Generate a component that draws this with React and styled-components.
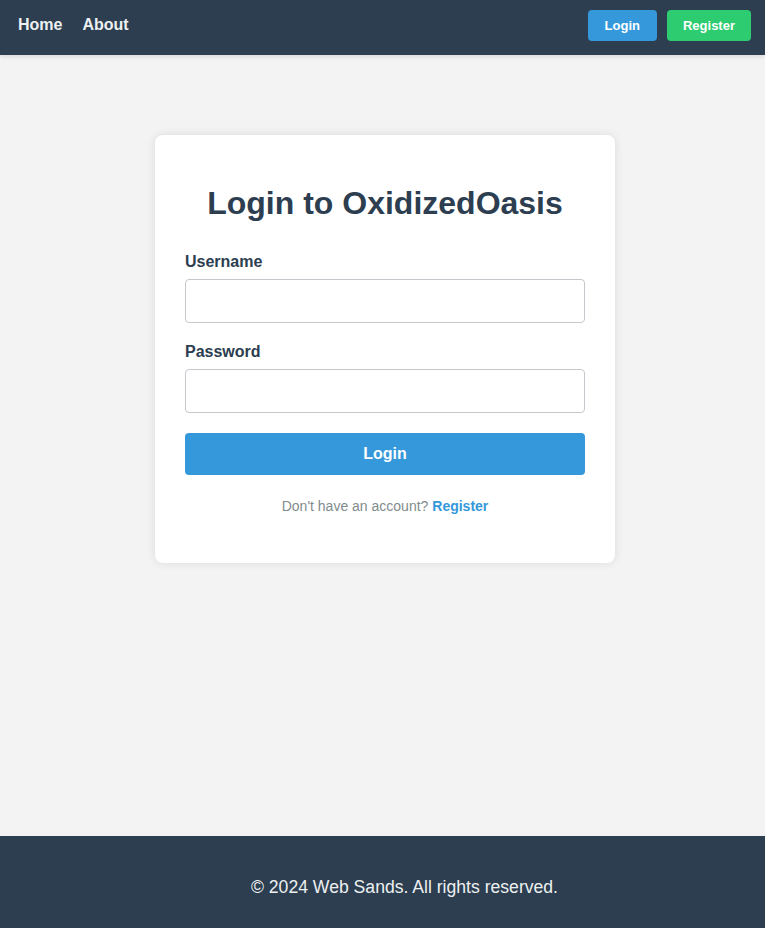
import React from "react";
import styled, { createGlobalStyle } from "styled-components";

const GlobalStyle = createGlobalStyle`
  * {
    box-sizing: border-box;
  }
  body {
    margin: 0;
    font-family: "Liberation Sans", Arial, sans-serif;
    background: #f3f3f3;
    color: #2c3e50;
  }
`;

const Page = styled.div`
  min-height: 100vh;
  display: flex;
  flex-direction: column;
`;

const Header = styled.header`
  height: 55px;
  background: #2c3e50;
  display: flex;
  align-items: center;
  justify-content: space-between;
  padding: 0 14px 0 18px;
  box-shadow: 0 2px 4px rgba(0, 0, 0, 0.1);
`;

const NavLinks = styled.nav`
  display: flex;
  gap: 20px;
  margin-top: -6px;
`;

const NavLink = styled.a`
  color: #ecf0f1;
  font-weight: bold;
  font-size: 16px;
  text-decoration: none;
`;

const NavButtons = styled.div`
  display: flex;
  gap: 10px;
  margin-top: -4px;
`;

const NavButton = styled.a`
  display: block;
  padding: 8px ${(p) => (p.$green ? "16px" : "17px")};
  font-size: 13px;
  line-height: 15px;
  font-weight: bold;
  color: #fff;
  text-decoration: none;
  border-radius: 4px;
  background: ${(p) => (p.$green ? "#2ecc71" : "#3498db")};
`;

const Main = styled.main`
  flex: 1;
  display: flex;
  justify-content: center;
  align-items: flex-start;
  padding: 80px 0 0 5px;
`;

const Card = styled.div`
  width: 460px;
  background: #fff;
  border-radius: 8px;
  padding: 30px;
  box-shadow: 0 0 10px rgba(0, 0, 0, 0.1);
`;

const Title = styled.h2`
  margin: 20px 0 31px;
  text-align: center;
  font-size: 32px;
  line-height: 37px;
  font-weight: bold;
  color: #2c3e50;
`;

const FormGroup = styled.div`
  margin-bottom: 20px;
`;

const Label = styled.label`
  display: block;
  font-weight: bold;
  font-size: 16px;
  line-height: 18px;
  margin-bottom: 8px;
  color: #2c3e50;
`;

const Input = styled.input`
  display: block;
  width: 100%;
  height: 44px;
  padding: 10px;
  font-size: 16px;
  border: 1px solid #c4c8cc;
  border-radius: 4px;
  background: #fff;
  outline: none;
`;

const SubmitButton = styled.button`
  display: block;
  width: 100%;
  height: 42px;
  border: none;
  border-radius: 4px;
  background: #3498db;
  color: #fff;
  font-family: inherit;
  font-size: 16px;
  font-weight: bold;
  cursor: pointer;
`;

const Switch = styled.p`
  margin: 23px 0 19px;
  text-align: center;
  font-size: 14px;
  line-height: 16px;
  color: #7f8c8d;
`;

const SwitchLink = styled.a`
  color: #3498db;
  font-weight: bold;
  text-decoration: none;
`;

const Footer = styled.footer`
  background: #2c3e50;
  color: #ecf0f1;
  text-align: center;
  padding: 41px 0 31px 44px;
  font-size: 17.6px;
  line-height: 20px;
`;

export default function App() {
  return (
    <Page>
      <GlobalStyle />
      <Header>
        <NavLinks>
          <NavLink href="#">Home</NavLink>
          <NavLink href="#">About</NavLink>
        </NavLinks>
        <NavButtons>
          <NavButton href="#">Login</NavButton>
          <NavButton href="#" $green>
            Register
          </NavButton>
        </NavButtons>
      </Header>
      <Main>
        <Card>
          <Title>Login to OxidizedOasis</Title>
          <form onSubmit={(e) => e.preventDefault()}>
            <FormGroup>
              <Label htmlFor="username">Username</Label>
              <Input id="username" type="text" />
            </FormGroup>
            <FormGroup>
              <Label htmlFor="password">Password</Label>
              <Input id="password" type="password" />
            </FormGroup>
            <SubmitButton type="submit">Login</SubmitButton>
          </form>
          <Switch>
            Don't have an account? <SwitchLink href="#">Register</SwitchLink>
          </Switch>
        </Card>
      </Main>
      <Footer>© 2024 Web Sands. All rights reserved.</Footer>
    </Page>
  );
}
